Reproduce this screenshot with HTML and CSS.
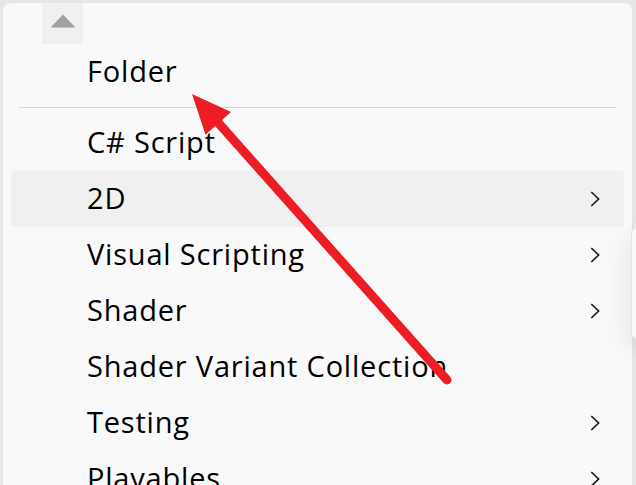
FILE: index.html
```html
<!DOCTYPE html>
<html>
<head>
<meta charset="utf-8">
<link rel="stylesheet" href="styles.css">
</head>
<body>
<div class="stage">
  <div class="menu">
    <div class="scroll-up">
      <svg width="26" height="14" viewBox="0 0 26 14"><polygon points="13,0.5 25.5,13.5 0.5,13.5" fill="#a0a0a0"/></svg>
    </div>
    <div class="item"><span class="label">Folder</span></div>
    <div class="sep"></div>
    <div class="item"><span class="label">C# Script</span></div>
    <div class="item hover"><span class="label">2D</span><svg class="chev" width="10" height="16" viewBox="0 0 10 16"><path d="M1.3 1 L8.6 8 L1.3 15" fill="none" stroke="#1b1b1b" stroke-width="1.7"/></svg></div>
    <div class="item"><span class="label">Visual Scripting</span><svg class="chev" width="10" height="16" viewBox="0 0 10 16"><path d="M1.3 1 L8.6 8 L1.3 15" fill="none" stroke="#1b1b1b" stroke-width="1.7"/></svg></div>
    <div class="item"><span class="label">Shader</span><svg class="chev" width="10" height="16" viewBox="0 0 10 16"><path d="M1.3 1 L8.6 8 L1.3 15" fill="none" stroke="#1b1b1b" stroke-width="1.7"/></svg></div>
    <div class="item"><span class="label">Shader Variant Collection</span></div>
    <div class="item"><span class="label">Testing</span><svg class="chev" width="10" height="16" viewBox="0 0 10 16"><path d="M1.3 1 L8.6 8 L1.3 15" fill="none" stroke="#1b1b1b" stroke-width="1.7"/></svg></div>
    <div class="item"><span class="label">Playables</span><svg class="chev" width="10" height="16" viewBox="0 0 10 16"><path d="M1.3 1 L8.6 8 L1.3 15" fill="none" stroke="#1b1b1b" stroke-width="1.7"/></svg></div>
  </div>
  <div class="flyout"></div>
  <svg class="annot" width="636" height="485" viewBox="0 0 636 485">
    <line x1="447" y1="380" x2="214" y2="118" stroke="#ee1c25" stroke-width="9" stroke-linecap="round"/>
    <polygon points="192,94 231,112 205.5,134.7" fill="#ee1c25"/>
  </svg>
</div>
</body>
</html>
```
FILE: styles.css
```css
html, body {
  margin: 0;
  padding: 0;
  background: #e6e6e6;
  overflow: hidden;
}
.stage {
  position: relative;
  width: 636px;
  height: 485px;
  overflow: hidden;
}
.menu {
  margin: 3px 0 0 3px;
  width: 630px;
  height: 482px;
  box-sizing: border-box;
  background: #f9f9f9;
  border-radius: 8px 8px 0 0;
  border-right: 1px solid #e2e2e2;
  display: flex;
  flex-direction: column;
  overflow: hidden;
  font-family: "Open Sans", "Noto Sans", sans-serif;
  font-size: 29px;
  letter-spacing: 0.8px;
  color: #000;
}
.scroll-up {
  margin-left: 39px;
  width: 41px;
  height: 41px;
  flex: none;
  background: #f0f0f0;
  display: flex;
  align-items: center;
  justify-content: center;
}
.scroll-up svg {
  margin-top: -6px;
}
.item {
  flex: none;
  height: 56px;
  box-sizing: border-box;
  margin: 0 8px;
  padding: 0 24px 0 76px;
  border-radius: 4px;
  display: flex;
  align-items: center;
  justify-content: space-between;
}
.item.hover {
  background: #f0f0f0;
}
.label {
  white-space: nowrap;
  line-height: 1;
  margin-bottom: 3px;
}
.chev {
  flex: none;
}
.sep {
  flex: none;
  height: 1px;
  margin: 7px 16px;
  background: #d7d7d7;
}
.flyout {
  position: absolute;
  left: 631px;
  top: 227px;
  width: 40px;
  height: 110px;
  background: #f9f9f9;
  border: 1px solid #e4e4e4;
  border-radius: 6px;
  box-shadow: -6px 8px 22px rgba(0,0,0,0.07);
}
.annot {
  position: absolute;
  left: 0;
  top: 0;
  pointer-events: none;
}
```
